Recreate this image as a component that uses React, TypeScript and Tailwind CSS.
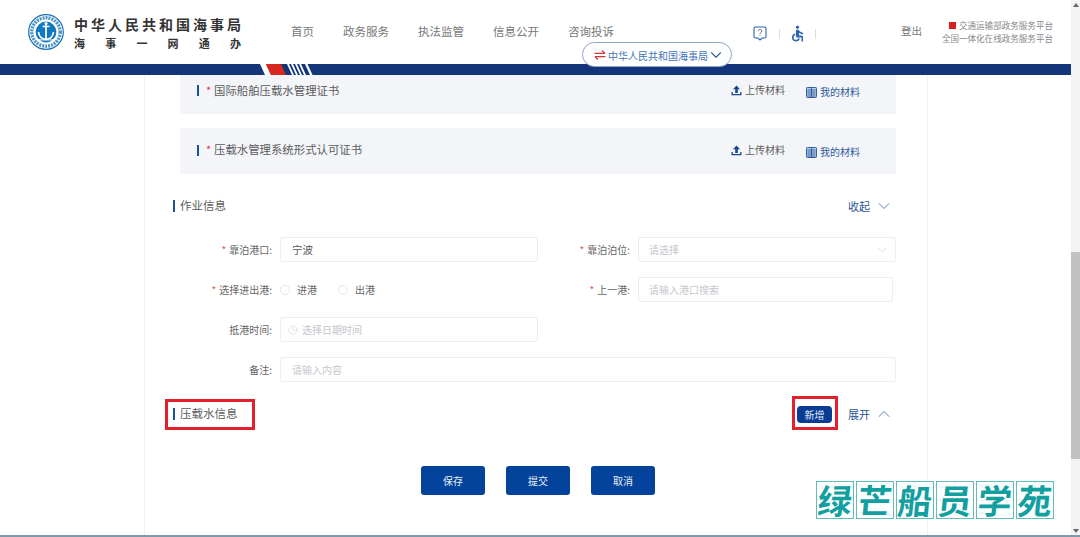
import React from "react";
import { ChevronDown, ChevronUp, Clock } from "lucide-react";
import { MdAccessible } from "react-icons/md";

const NAV = ["政务服务", "执法监管", "信息公开", "咨询投诉"];

function Logo() {
  return (
    <svg width="36" height="36" viewBox="0 0 36 36" className="shrink-0">
      <circle cx="18" cy="18" r="17.3" fill="#fff" stroke="#1f6fb5" strokeWidth="1.2" />
      <circle cx="18" cy="18" r="14.2" fill="none" stroke="#4a93c9" strokeWidth="3.4" strokeDasharray="2 1" />
      <circle cx="18" cy="18" r="11.6" fill="#fff" />
      <circle cx="18" cy="18" r="10.4" fill="#0f78c0" />
      <path d="M18 8.5v17M14.5 12.5h7M10.5 18c.5 4.5 3.5 7 7.5 7.5 4-.5 7-3 7.5-7.5" fill="none" stroke="#fff" strokeWidth="1.7" />
      <circle cx="18" cy="9.5" r="1.6" fill="#fff" />
      <path d="M8 24.5c3 1.5 5 1.5 10 1.5s7 0 10-1.5" fill="none" stroke="#fff" strokeWidth="1" />
    </svg>
  );
}

function UploadIcon() {
  return (
    <svg width="11" height="11" viewBox="0 0 11 11" className="shrink-0">
      <path d="M5.5 0.5 9 4.3H6.8V8H4.2V4.3H2z" fill="#17468f" />
      <path d="M0.5 7v3.2h10V7h-1.3v2H1.8V7z" fill="#17468f" />
    </svg>
  );
}

function BookIcon() {
  return (
    <svg width="11" height="11" viewBox="0 0 11 11" className="shrink-0">
      <rect x="0.5" y="0.5" width="10" height="10" rx="0.8" fill="#b9cbe4" stroke="#2f5f9f" />
      <path d="M5.5 1v9M1.5 3h8M1.5 5h8M1.5 7h8M1.5 9h8" stroke="#2f5f9f" strokeWidth="0.9" />
    </svg>
  );
}

function DocRow({ title, tall }: { title: string; tall?: boolean }) {
  return (
    <div className={`flex ${tall ? "h-[46px] pt-[14px]" : "h-[39px] pt-[8px]"} w-[716px] items-start bg-[#f3f5f9] pl-[17px] pr-[36px]`}>
      <span className={`${tall ? "mt-[3px]" : "mt-[2px]"} h-[11px] w-[2px] bg-[#1d4f9c]`} />
      <span className="ml-[7px] w-[8px] text-[11px] leading-[14px] text-[#e2343f]">*</span>
      <span className="text-[11.4px] leading-[14px] text-[#5c5c5c]">{title}</span>
      <div className={`ml-auto flex items-start ${tall ? "pt-[1px]" : ""}`}>
        <span className="flex items-center gap-[3px] text-[10px] leading-[14px] text-[#5c5c5c]">
          <UploadIcon />
          上传材料
        </span>
        <span className="ml-[21px] mt-[2px] flex items-center gap-[3px] text-[10px] leading-[14px] text-[#2f5d9b]">
          <BookIcon />
          我的材料
        </span>
      </div>
    </div>
  );
}

function Label({ text, required, w }: { text: string; required?: boolean; w: string }) {
  return (
    <div className={`${w} mr-[8px] shrink-0 text-right text-[10px] leading-[25px] text-[#666]`}>
      {required && <span className="mr-[3px] text-[#e2535c]">*</span>}
      {text}
    </div>
  );
}

function Box({ children, w }: { children?: React.ReactNode; w: string }) {
  return (
    <div className={`${w} flex h-[25px] shrink-0 items-center rounded-[2px] border border-[#eceef2] bg-white text-[10px]`}>
      {children}
    </div>
  );
}

function Radio({ text }: { text: string }) {
  return (
    <span className="flex items-center text-[10px] text-[#666]">
      <span className="h-[10px] w-[10px] rounded-full border border-[#e4e6ea]" />
      <span className="ml-[7px]">{text}</span>
    </span>
  );
}

function SectionHead({ title, action, up, extra }: { title: string; action: string; up?: boolean; extra?: React.ReactNode }) {
  return (
    <div className="flex h-[20px] w-[724px] items-center">
      <span className="h-[12px] w-[2px] bg-[#1d4f9c]" />
      <span className="ml-[5px] text-[11.5px] text-[#5c5c5c]">{title}</span>
      <div className="ml-auto flex items-center">
        {extra}
        <span className="text-[11px] text-[#2d5394]">{action}</span>
        {up ? (
          <ChevronUp className="ml-[4px] mr-[3px] text-[#2d5394]" size={20} strokeWidth={0.9} />
        ) : (
          <ChevronDown className="ml-[4px] mr-[3px] text-[#2d5394]" size={20} strokeWidth={0.9} />
        )}
      </div>
    </div>
  );
}

function Btn({ text }: { text: string }) {
  return (
    <button className="h-[29px] w-[64px] rounded-[3px] bg-[#03439b] text-[10px] text-[#e8eef8]">{text}</button>
  );
}

function WatermarkCell({ ch }: { ch: string }) {
  return (
    <div className="relative h-[38px] w-[38px] border border-[#66bcbc] bg-white/80">
      <svg width="36" height="36" viewBox="0 0 36 36" className="absolute inset-0">
        <path d="M0 0 36 36M36 0 0 36M18 0v36M0 18h36" stroke="#bfe3e3" strokeWidth="0.6" strokeDasharray="2 1.5" />
      </svg>
      <span className="absolute inset-0 flex -skew-x-6 items-center justify-center text-[34px] font-bold leading-none text-[#139f9f]">
        {ch}
      </span>
    </div>
  );
}

export default function App() {
  return (
    <div className="relative flex h-[537px] w-[1080px] overflow-hidden bg-white font-['Noto_Sans_CJK_SC','Liberation_Sans',sans-serif]">
      <div className="flex w-[1071px] flex-col">
        {/* header */}
        <header className="flex h-[64px] items-start pl-[28px] pt-[14px]">
          <Logo />
          <div className="ml-[10px] w-[167px]">
            <div className="whitespace-nowrap text-[14px] font-bold leading-[20px] tracking-[3px] text-[#333]">中华人民共和国海事局</div>
            <div className="mt-[1px] flex justify-between text-[11px] font-bold leading-[16px] text-[#333]">
              {"海事一网通办".split("").map((c) => (
                <span key={c}>{c}</span>
              ))}
            </div>
          </div>
          <nav className="ml-[50px] mt-[8px] flex gap-[29px] text-[11.5px] leading-[18px] text-[#777]">
            <span>首页</span>
            {NAV.map((n) => (
              <span key={n}>{n}</span>
            ))}
          </nav>
          <div className="ml-[139px] mt-[10px] flex items-center">
            <svg width="14" height="15" viewBox="0 0 14 15" fill="none">
              <path d="M2.5 1h9A1.5 1.5 0 0 1 13 2.5v8a1.5 1.5 0 0 1-1.5 1.5H9l-2 2-2-2H2.5A1.5 1.5 0 0 1 1 10.5v-8A1.5 1.5 0 0 1 2.5 1z" stroke="#2b67ad" strokeWidth="1.1" />
              <path d="M5.3 5.2C5.3 4 6 3.4 7 3.4s1.8.7 1.8 1.6c0 1.3-1.8 1.4-1.8 2.9M7 9v1" stroke="#666" strokeWidth="1" />
            </svg>
            <span className="ml-[12px] h-[10px] w-px bg-[#ddd]" />
            <MdAccessible className="ml-[8px] text-[#2b67ad]" size={19} />
            <span className="ml-[8px] h-[10px] w-px bg-[#ddd]" />
          </div>
          <span className="ml-[85px] mt-[8px] text-[10.5px] leading-[18px] text-[#777]">登出</span>
          <div className="ml-auto mr-[18px] mt-[5px] flex flex-col items-end text-[8.55px] leading-[13px] text-[#888]">
            <span className="flex items-center">
              <span className="mr-[3px] h-[7px] w-[7px] bg-[#d9201f]" />
              交通运输部政务服务平台
            </span>
            <span>全国一体化在线政务服务平台</span>
          </div>
        </header>
        <div className="relative h-[10.5px] shrink-0 bg-[#15357a]">
          <svg width="60" height="11" viewBox="0 0 60 11" className="absolute left-[258px] top-0">
            <path d="M2 0h6l5 11H7z" fill="#fff" />
            <path d="M8 0h15l5 11H13z" fill="#d9281f" />
            <path d="M29 0h2l5 11h-2zM33 0h2l5 11h-2zM37 0h2l5 11h-2zM41 0h2l5 11h-2z" fill="#fff" />
            <path d="M47 0h2.5l5 11H52z" fill="#fff" />
          </svg>
        </div>

        {/* card */}
        <main className="ml-[144px] w-[784px] flex-1 border-x border-[#f0f1f3] pt-[0.5px]">
          <div className="ml-[35px] flex flex-col gap-[14px]">
            <DocRow title="国际船舶压载水管理证书" />
            <DocRow title="压载水管理系统形式认可证书" tall />
          </div>
          <div className="ml-[28px] mt-[22px]">
            <SectionHead title="作业信息" action="收起" />
          </div>
          <div className="mt-[21px] flex flex-col gap-[15px]">
            <div className="flex">
              <Label w="w-[127px]" text="靠泊港口:" required />
              <Box w="w-[258px]"><span className="ml-[11px] text-[10.5px] text-[#555]">宁波</span></Box>
              <Label w="w-[92px]" text="靠泊泊位:" required />
              <Box w="w-[258px]">
                <span className="ml-[10px] text-[#c4c6cb]">请选择</span>
                <ChevronDown className="ml-auto mr-[6px] text-[#c8cad0]" size={14} strokeWidth={1} />
              </Box>
            </div>
            <div className="flex">
              <Label w="w-[127px]" text="选择进出港:" required />
              <div className="flex w-[258px] shrink-0 items-center gap-[21px]">
                <Radio text="进港" />
                <Radio text="出港" />
              </div>
              <Label w="w-[92px]" text="上一港:" required />
              <Box w="w-[255px]"><span className="ml-[10px] text-[#c4c6cb]">请输入港口搜索</span></Box>
            </div>
            <div className="flex">
              <Label w="w-[127px]" text="抵港时间:" />
              <Box w="w-[258px]">
                <Clock className="ml-[7px] text-[#c4c6cb]" size={10} strokeWidth={1.2} />
                <span className="ml-[4px] text-[#c4c6cb]">选择日期时间</span>
              </Box>
            </div>
            <div className="flex">
              <Label w="w-[127px]" text="备注:" />
              <Box w="w-[616px]"><span className="ml-[11px] text-[#c4c6cb]">请输入内容</span></Box>
            </div>
          </div>
          <div className="ml-[28px] mt-[22px]">
            <SectionHead
              title="压载水信息"
              action="展开"
              up
              extra={
                <button className="mr-[16px] h-[17px] w-[35px] rounded-[4px] bg-[#0b3c94] text-[10px] leading-[17px] text-[#dfe8f6]">新增</button>
              }
            />
          </div>
          <div className="ml-[276px] mt-[42px] flex gap-[21px]">
            <Btn text="保存" />
            <Btn text="提交" />
            <Btn text="取消" />
          </div>
        </main>
      </div>

      {/* scrollbar */}
      <div className="flex w-[9px] flex-col items-center bg-[#f3f3f3]">
        <svg width="6" height="4" viewBox="0 0 6 4" className="mt-[3px]"><path d="M3 0 6 4H0z" fill="#666" /></svg>
        <div className="mt-[245px] h-[207px] w-full bg-[#c1c1c1]" />
        <svg width="6" height="4" viewBox="0 0 6 4" className="mt-[70px]"><path d="M0 0h6L3 4z" fill="#666" /></svg>
      </div>

      {/* bottom edge of the captured window */}
      <div className="absolute bottom-0 left-0 h-[2px] w-full bg-[#7f9aad]" />

      {/* organisation switch */}
      <div className="absolute left-[582px] top-[42px] flex h-[25px] w-[150px] items-center rounded-full border border-[#8fa6cb] bg-white pl-[11px] pt-[1px] text-[10px] text-[#3f73b8]">
        <svg width="12" height="10" viewBox="0 0 12 10" fill="none" className="shrink-0">
          <path d="M0.5 3.3H11M8 0.5 11 3.3M11.5 6.7H1M4 9.5 1 6.7" stroke="#d8333a" strokeWidth="1.2" />
        </svg>
        <span className="ml-[2px] whitespace-nowrap">中华人民共和国海事局</span>
        <ChevronDown className="ml-[-1px] text-[#2f5f9f]" size={18} strokeWidth={1.5} />
      </div>

      {/* annotations */}
      <div className="absolute left-[165px] top-[399px] h-[31px] w-[90px] border-[3px] border-[#e3202b]" />
      <div className="absolute left-[792px] top-[396px] h-[34px] w-[46px] border-[3px] border-[#e3202b]" />

      {/* watermark */}
      <div className="absolute left-[816px] top-[481px] flex gap-[2px]">
        {"绿芒船员学苑".split("").map((c) => (
          <WatermarkCell key={c} ch={c} />
        ))}
      </div>
    </div>
  );
}
